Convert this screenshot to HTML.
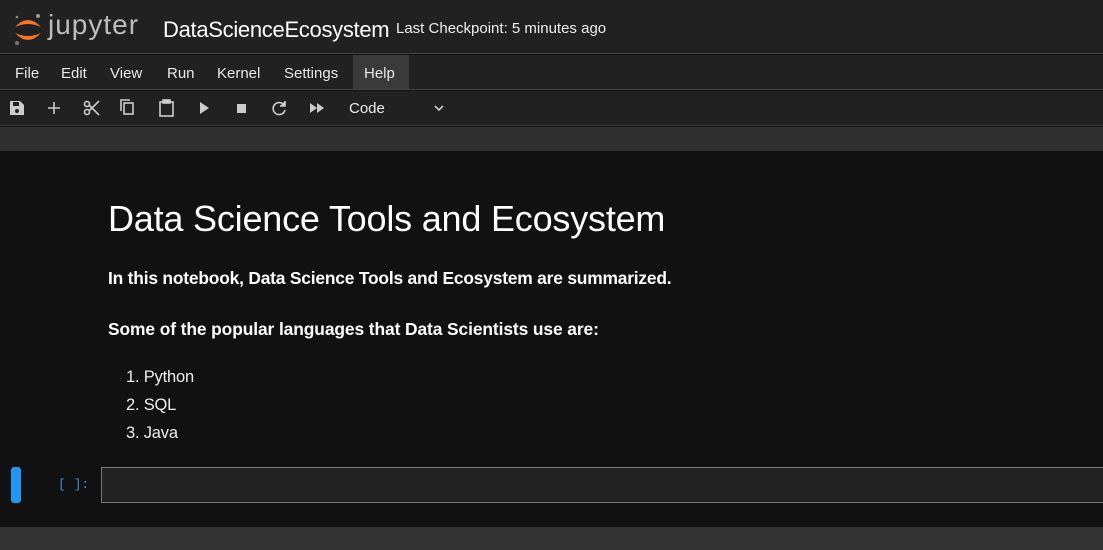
<!DOCTYPE html>
<html><head><style>
*{margin:0;padding:0;box-sizing:border-box}
body{width:1103px;height:550px;overflow:hidden;background:#111;font-family:"Liberation Sans",sans-serif;color:#fff;position:relative}
.a{position:absolute;white-space:nowrap}
#hdr{left:0;top:0;width:1103px;height:54px;background:#212121;border-bottom:1px solid #444}
#menu{left:0;top:55px;width:1103px;height:35px;background:#212121;border-bottom:1px solid #444}
#tb{left:0;top:91px;width:1103px;height:35px;background:#212121;border-bottom:1px solid #3a3a3a}
#strip{left:0;top:127px;width:1103px;height:24px;background:#303030}
#bot{left:0;top:527px;width:1103px;height:23px;background:#333}
.m{font-size:15px;color:#e8e8e8;top:65px}
svg{position:absolute}
</style></head><body>
<div class="a" id="hdr"></div>
<svg style="left:12px;top:12px" width="32" height="34" viewBox="0 0 32 34">
<path d="M3 15 Q16 1 29 15 Q16 9 3 15Z" fill="#f37726"/>
<path d="M3 21 Q16 35 29 21 Q16 27 3 21Z" fill="#f37726"/>
<circle cx="26" cy="4" r="2" fill="#9e9e9e"/><circle cx="5" cy="31" r="2" fill="#777"/><circle cx="5" cy="5" r="1.3" fill="#888"/>
</svg>
<div class="a" style="left:48px;top:9px;font-size:28px;color:#bdbdbd;letter-spacing:1px">jupyter</div>
<div class="a" style="left:163px;top:17px;font-size:22px;color:#fff;letter-spacing:-0.3px">DataScienceEcosystem</div>
<div class="a" style="left:396px;top:20px;font-size:15px;color:#eee">Last Checkpoint: 5 minutes ago</div>
<div class="a" id="menu"></div>
<div class="a" style="left:353px;top:55px;width:56px;height:34px;background:#3a3a3a"></div>
<div class="a m" style="left:15px">File</div>
<div class="a m" style="left:61px">Edit</div>
<div class="a m" style="left:110px">View</div>
<div class="a m" style="left:167px">Run</div>
<div class="a m" style="left:217px">Kernel</div>
<div class="a m" style="left:284px">Settings</div>
<div class="a m" style="left:364px">Help</div>
<div class="a" id="tb"></div>
<svg style="left:0;top:91px" width="460" height="35" viewBox="0 0 460 35" fill="none" stroke="#ccc" stroke-width="1.6">
<path d="M10 10h10l4 4v10H10z" fill="#ccc" stroke="none"/><rect x="13" y="11" width="6" height="4" fill="#212121" stroke="none"/><circle cx="17" cy="20" r="2" fill="#212121" stroke="none"/>
<path d="M54 11v12M48 17h12"/>
<circle cx="87" cy="21" r="2.5"/><circle cx="87" cy="13" r="2.5"/><path d="M89 14l10 10M89 20l10-10"/>
<rect x="124" y="12" width="9" height="11"/><path d="M121 20V9h9"/>
<rect x="160" y="11" width="13" height="14"/><rect x="163" y="9" width="7" height="3" fill="#ccc"/>
<path d="M200 11l9 6-9 6z" fill="#ccc" stroke="none"/>
<rect x="237" y="13" width="9" height="9" fill="#ccc" stroke="none"/>
<path d="M284 14a6 6 0 1 0 1 5"/><path d="M285 10v5h-5" fill="#ccc"/>
<path d="M310 12l7 5-7 5zM317 12l7 5-7 5z" fill="#ccc" stroke="none"/>
<path d="M435 15l4 4 4-4"/>
</svg>
<div class="a" style="left:349px;top:100px;font-size:15px;color:#eee">Code</div>
<div class="a" id="strip"></div>
<div class="a" style="left:108px;top:198px;font-size:36px;letter-spacing:-0.2px">Data Science Tools and Ecosystem</div>
<div class="a" style="left:108px;top:268px;font-size:17.4px;font-weight:bold;letter-spacing:-0.2px">In this notebook, Data Science Tools and Ecosystem are summarized.</div>
<div class="a" style="left:108px;top:319px;font-size:17.4px;font-weight:bold;letter-spacing:-0.1px">Some of the popular languages that Data Scientists use are:</div>
<div class="a" style="left:126px;top:363px;font-size:16.5px;line-height:28px;color:#eee;letter-spacing:-0.2px">1. Python<br>2. SQL<br>3. Java</div>
<div class="a" style="left:11px;top:467px;width:10px;height:36px;background:#2196f3;border-radius:3px"></div>
<div class="a" style="left:58px;top:477px;font-family:'Liberation Mono',monospace;font-size:13px;color:#3a8fd8">[ ]:</div>
<div class="a" style="left:101px;top:467px;width:1010px;height:36px;background:#222;border:1px solid #777"></div>
<div class="a" id="bot"></div>
</body></html>
